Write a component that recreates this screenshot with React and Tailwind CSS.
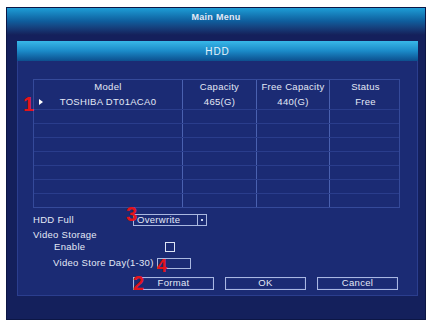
export default function App() {
  const rows = Array.from({ length: 7 });

  return (
    <div className="w-[429px] h-[323px] bg-white pt-[7px] pl-[6px] font-['Liberation_Sans',Arial,sans-serif] text-[#e3e9f6] tracking-[0.3px]">
      <div className="relative w-[420px] h-[313px] bg-[#14205c] flex flex-col border border-[#0c1645]">
        {/* title bar */}
        <div className="h-[27px] pt-[3px] bg-gradient-to-b from-[#1e9dd6] via-[#0f5c9b] to-[#14205a] flex items-start justify-center text-[9px] font-bold">
          Main Menu
        </div>

        <div className="mt-[6px] ml-[10px] mr-[7px] mb-[23px] flex flex-col flex-1">
          {/* HDD bar */}
          <div className="h-[20px] bg-gradient-to-b from-[#38b8e8] via-[#1b8ac8] to-[#0d4f8e] flex items-center justify-center text-[10px] tracking-[1px] text-[#e8f3fb]">
            HDD
          </div>

          <div className="flex-1 bg-[#1b2b74] border-x border-b border-[#2b3e8e] pt-[18px] pl-[15px] pr-[17px] flex flex-col">
            {/* table */}
            <div className="w-[367px] border border-[#354a9a] text-[9.5px]">
              <div className="grid grid-cols-[148px_74px_73px_72px] h-[15px] items-center text-center">
                <div>Model</div>
                <div className="h-full flex items-center justify-center border-l border-[#4a61b0]">Capacity</div>
                <div className="h-full flex items-center justify-center border-l border-[#4a61b0]">Free Capacity</div>
                <div className="h-full flex items-center justify-center border-l border-[#4a61b0]">Status</div>
              </div>
              <div className="grid grid-cols-[148px_74px_73px_72px] h-[14px] items-center text-center">
                <div className="relative h-full flex items-center justify-center">
                  <span className="absolute left-[5px] top-[4px] w-0 h-0 border-y-[3px] border-y-transparent border-l-[4px] border-l-white" />
                  TOSHIBA DT01ACA0
                </div>
                <div className="h-full flex items-center justify-center border-l border-[#4a61b0]">465(G)</div>
                <div className="h-full flex items-center justify-center border-l border-[#4a61b0]">440(G)</div>
                <div className="h-full flex items-center justify-center border-l border-[#4a61b0]">Free</div>
              </div>
              {rows.map((_, i) => (
                <div key={i} className="grid grid-cols-[148px_74px_73px_72px] h-[14px] border-t border-[#2a3d8c]">
                  <div />
                  <div className="border-l border-[#4a61b0]" />
                  <div className="border-l border-[#4a61b0]" />
                  <div className="border-l border-[#4a61b0]" />
                </div>
              ))}
            </div>

            {/* settings */}
            <div className="mt-[6px] flex items-center h-[12px] text-[9.5px]">
              <span className="w-[100px]">HDD Full</span>
              <div className="w-[74px] h-[12px] border border-[#aab8e0] flex items-center">
                <span className="flex-1 pl-[3px] leading-none">Overwrite</span>
                <span className="w-[9px] h-full border-l border-[#aab8e0] flex items-center justify-center">
                  <span className="w-[2px] h-[2px] bg-[#c9d3ee]" />
                </span>
              </div>
            </div>
            <div className="mt-[4px] h-[11px] flex items-center text-[9.5px]">Video Storage</div>
            <div className="h-[12px] flex items-center text-[9.5px]">
              <span className="ml-[21px] w-[111px]">Enable</span>
              <span className="w-[10px] h-[10px] border border-[#dde4f5]" />
            </div>
            <div className="mt-[5px] h-[11px] flex items-center text-[9.5px]">
              <span className="ml-[20px] w-[104px]">Video Store Day(1-30)</span>
              <span className="w-[34px] h-[11px] border border-[#aab8e0]" />
            </div>

            {/* buttons */}
            <div className="mt-[8px] ml-[100px] flex gap-[11px] text-[9.5px]">
              {['Format', 'OK', 'Cancel'].map((b) => (
                <div key={b} className="w-[81px] h-[13px] border border-[#a9b7e2] shadow-[inset_0_0_0_1px_#22337e] flex items-center justify-center">
                  {b}
                </div>
              ))}
            </div>
          </div>
        </div>

        {/* red annotations */}
        <span className="absolute left-[16px] top-[86px] text-[20px] leading-none font-bold text-[#e3141c]">1</span>
        <span className="absolute left-[119px] top-[196px] text-[20px] leading-none font-bold text-[#e3141c]">3</span>
        <span className="absolute left-[150px] top-[249px] text-[18px] leading-none font-bold text-[#e3141c]">4</span>
        <span className="absolute left-[126px] top-[265px] text-[20px] leading-none font-bold text-[#e3141c]">2</span>
      </div>
    </div>
  );
}
